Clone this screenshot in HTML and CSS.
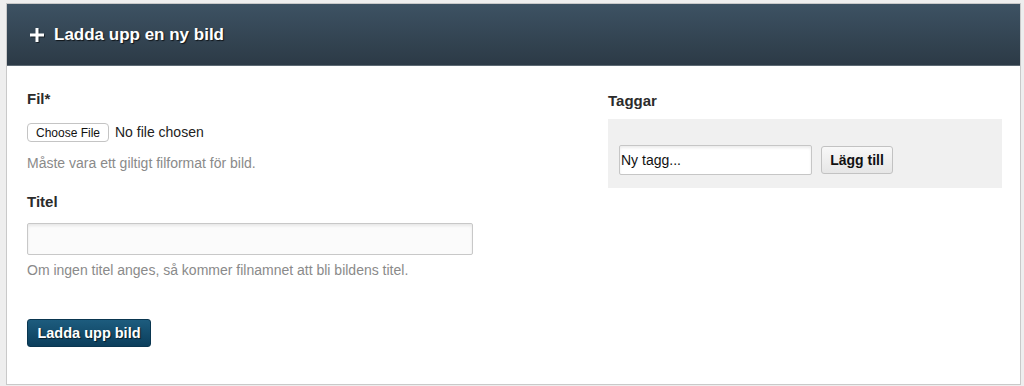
FILE: index.html
```html
<!DOCTYPE html>
<html>
    <head>
        <title>Ladda upp en ny bild</title>
        <meta charset="UTF-8">
        <link rel="stylesheet" href="styles.css">
    </head>
    <body>
        <div class="panel">
            <div class="panel-head">
                <svg class="plus" width="14" height="14" viewBox="0 0 14 14"><rect x="5.5" y="0" width="3" height="14" fill="#fff"/><rect x="0" y="5.5" width="14" height="3" fill="#fff"/></svg>
                <span>Ladda upp en ny bild</span>
            </div>
            <form class="panel-body">
                <div class="col-left">
                    <label class="field-label">Fil*</label>
                    <input class="file-input" type="file" name="file">
                    <p class="help">Måste vara ett giltigt filformat för bild.</p>
                    <label class="field-label label-titel">Titel</label>
                    <input class="text-input" type="text" name="title">
                    <p class="help help-titel">Om ingen titel anges, så kommer filnamnet att bli bildens titel.</p>
                    <button class="btn-primary" type="submit">Ladda upp bild</button>
                </div>
                <div class="col-right">
                    <label class="field-label">Taggar</label>
                    <div class="tag-box">
                        <input class="tag-input" type="text" value="Ny tagg...">
                        <button class="btn-tag" type="button">Lägg till</button>
                    </div>
                </div>
            </form>
        </div>
    </body>
</html>
```

FILE: styles.css
```css
body {
    margin: 0;
    padding: 3px 3px 2px 6px;
    background-color: #eeeeee;
    font-family: "Liberation Sans", Arial, sans-serif;
    color: #333;
}
.panel {
    background-color: #fff;
    border: 1px solid #c9c9c9;
}
.panel-head {
    height: 61px;
    display: flex;
    align-items: center;
    gap: 10px;
    padding-left: 23px;
    background: linear-gradient(#3d5263, #2c3a46);
    border-bottom: 1px solid #5d6a74;
    color: #fff;
    font-size: 17px;
    font-weight: bold;
    text-shadow: 1px 1px 1px rgba(0, 0, 0, 0.7);
}
.plus {
    filter: drop-shadow(1px 1px 0 rgba(0, 0, 0, 0.5));
}
.panel-body {
    display: grid;
    grid-template-columns: 1fr 394px;
    column-gap: 20px;
    padding: 23px 18px 37px 20px;
}
.col-left, .col-right {
    display: flex;
    flex-direction: column;
    align-items: flex-start;
}
.col-right {
    align-items: stretch;
    padding-top: 2px;
}
.field-label {
    font-size: 15px;
    line-height: 20px;
    font-weight: bold;
    color: #2b2b2b;
}
.label-titel {
    margin-top: 20px;
}
.file-input {
    margin-top: 14px;
    height: 20px;
    font-family: "Liberation Sans", Arial, sans-serif;
    font-size: 14px;
    color: #222;
}
.file-input::file-selector-button {
    width: 82px;
    height: 19px;
    margin-right: 6px;
    padding: 0;
    background: #fff;
    border: 1px solid #c4c4c4;
    border-radius: 4px;
    font-family: "Liberation Sans", Arial, sans-serif;
    font-size: 12px;
    color: #111;
}
.help {
    margin: 11px 0 0 0;
    font-size: 14px;
    line-height: 18px;
    color: #8a8a8a;
}
.help-titel {
    margin-top: 6px;
}
.text-input {
    margin-top: 11px;
    width: 446px;
    height: 32px;
    box-sizing: border-box;
    border: 1px solid #c8c8c8;
    border-radius: 2px;
    background: #fbfbfb;
    box-shadow: inset 0 2px 3px rgba(0, 0, 0, 0.08);
}
.btn-primary {
    margin-top: 40px;
    width: 124px;
    height: 28px;
    padding: 0;
    background: linear-gradient(#1d5c7e, #0b3e5c);
    border: 1px solid #0a3650;
    border-radius: 3px;
    color: #fff;
    font-family: "Liberation Sans", Arial, sans-serif;
    font-size: 14.5px;
    font-weight: bold;
    text-shadow: 1px 1px 1px rgba(0, 0, 0, 0.6);
}
.tag-box {
    margin-top: 8px;
    display: flex;
    align-items: center;
    gap: 9px;
    padding: 26px 11px 13px 11px;
    background-color: #f0f0f0;
}
.tag-input {
    width: 193px;
    height: 30px;
    box-sizing: border-box;
    padding: 0 1px;
    border: 1px solid #c6c6c6;
    border-radius: 2px;
    box-shadow: inset 0 2px 3px rgba(0, 0, 0, 0.08);
    font-family: "Liberation Sans", Arial, sans-serif;
    font-size: 14px;
    color: #111;
}
.btn-tag {
    width: 72px;
    height: 28px;
    padding: 0;
    background: linear-gradient(#f8f8f8, #e6e6e6);
    border: 1px solid #c2c2c2;
    border-radius: 3px;
    font-family: "Liberation Sans", Arial, sans-serif;
    font-size: 14px;
    font-weight: bold;
    color: #111;
}
```
